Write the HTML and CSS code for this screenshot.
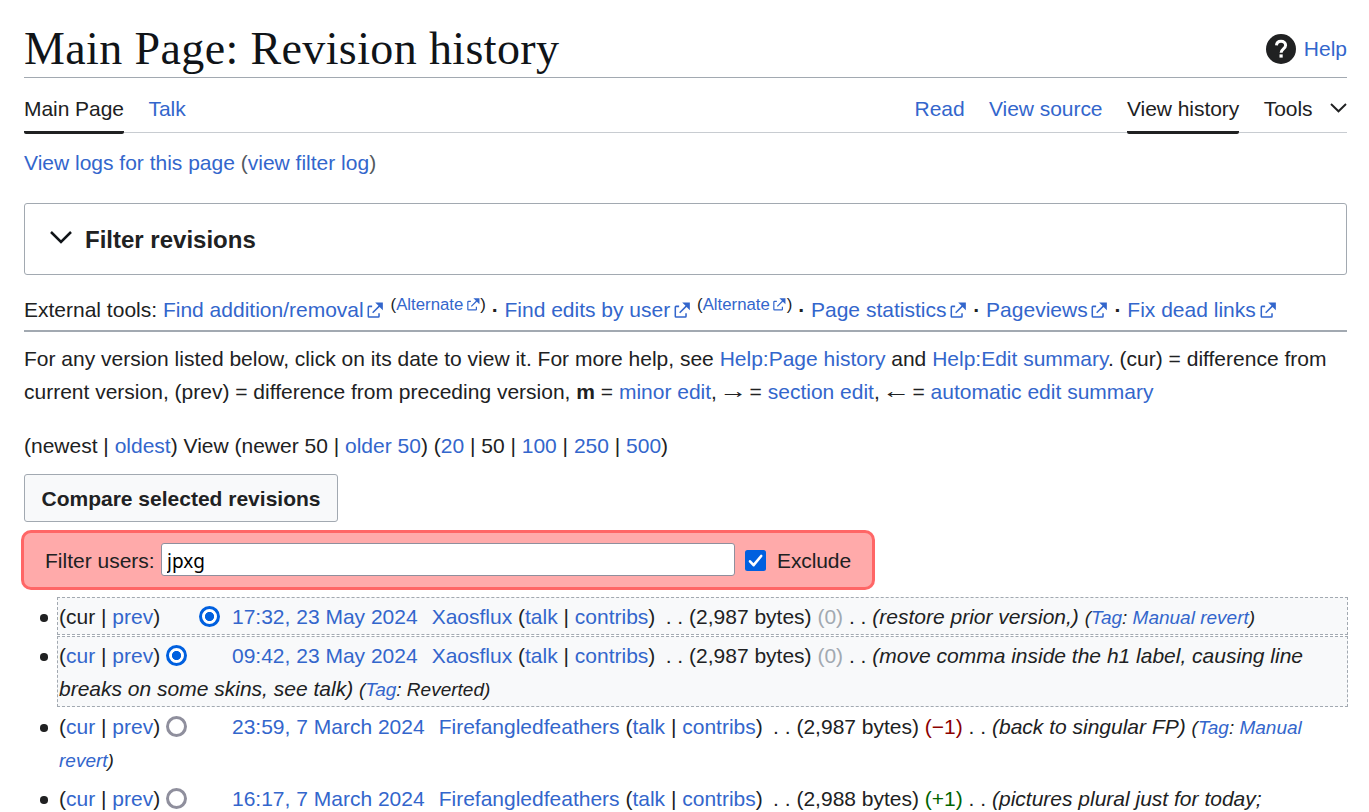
FILE: index.html
```html
<!DOCTYPE html>
<html lang="en">
<head>
<meta charset="utf-8">
<title>Main Page: Revision history</title>
<link rel="stylesheet" href="styles.css">
</head>
<body>
<svg class="defs" width="0" height="0" aria-hidden="true">
  <symbol id="ext" viewBox="0 0 12 12"><path fill="#36c" d="M6 1h5v5L8.86 3.85 4.7 8 4 7.3l4.15-4.16zM2 3h2v1H2v6h6V8h1v2a1 1 0 0 1-1 1H2a1 1 0 0 1-1-1V4a1 1 0 0 1 1-1"/></symbol>
</svg>
<header class="title-row">
  <h1>Main Page: Revision history</h1>
  <a class="help" href="#"><svg width="30" height="30" viewBox="0 0 30 30"><circle cx="15" cy="15" r="15" fill="#202122"/><path d="M10.500 11.400c.1-2.700 1.900-4.200 4.500-4.200 2.700 0 4.600 1.600 4.600 4 0 3.600-4.500 3.600-4.500 7.500" fill="none" stroke="#fff" stroke-width="3"/><rect x="13.500" y="20.400" width="3.200" height="3.200" fill="#fff"/></svg>Help</a>
</header>
<nav class="tabs">
  <span class="tab on">Main Page</span><a class="tab" href="#">Talk</a>
  <span class="grow"></span>
  <a class="tab" href="#">Read</a><a class="tab" href="#">View source</a><span class="tab on">View history</span>
  <span class="tab">Tools<svg class="caret" width="17" height="10" viewBox="0 0 17 10"><path d="M1 1l7.500 7.300L16 1" fill="none" stroke="#202122" stroke-width="1.900"/></svg></span>
</nav>
<p class="sub"><a href="#">View logs for this page</a> (<a href="#">view filter log</a>)</p>
<section class="filter-box"><svg width="22" height="13" viewBox="0 0 22 13"><path d="M1 1l10 10L21 1" fill="none" stroke="#101418" stroke-width="2.500"/></svg><b>Filter revisions</b></section>
<p class="tools">External tools: <a href="#">Find addition/removal<svg class="ext"><use href="#ext"/></svg></a> <span class="sup">(<a href="#">Alternate<svg class="ext"><use href="#ext"/></svg></a>)</span> <b>·</b> <a href="#">Find edits by user<svg class="ext"><use href="#ext"/></svg></a> <span class="sup">(<a href="#">Alternate<svg class="ext"><use href="#ext"/></svg></a>)</span> <b>·</b> <a href="#">Page statistics<svg class="ext"><use href="#ext"/></svg></a> <b>·</b> <a href="#">Pageviews<svg class="ext"><use href="#ext"/></svg></a> <b>·</b> <a href="#">Fix dead links<svg class="ext"><use href="#ext"/></svg></a></p>
<p class="legend">For any version listed below, click on its date to view it. For more help, see <a href="#">Help:Page history</a> and <a href="#">Help:Edit summary</a>. (cur) = difference from<br>current version, (prev) = difference from preceding version, <b>m</b> = <a href="#">minor edit</a>, <span class="arrow">→</span> = <a href="#">section edit</a>, <span class="arrow">←</span> = <a href="#">automatic edit summary</a></p>
<p class="pager">(newest | <a href="#">oldest</a>) View (newer 50 | <a href="#">older 50</a>) (<a href="#">20</a> | 50 | <a href="#">100</a> | <a href="#">250</a> | <a href="#">500</a>)</p>
<button class="compare">Compare selected revisions</button>
<div class="user-filter">
  <label for="users">Filter users:</label><input id="users" type="text" value="jpxg">
  <svg width="21" height="21" viewBox="0 0 21 21"><rect width="21" height="21" rx="2.500" fill="#0060df"/><path d="M5 11.300l3.600 3.900 7.600-9.200" fill="none" stroke="#fff" stroke-width="2.600" stroke-linecap="round" stroke-linejoin="round"/></svg>
  <span class="exclude">Exclude</span>
</div>
<ul class="history">
  <li class="sel"><span class="nav">(cur | <a href="#">prev</a>)</span><span class="pick second"><i class="radio checked"></i></span><a class="date" href="#">17:32, 23 May 2024</a><a class="user" href="#">Xaosflux</a> (<a href="#">talk</a> | <a href="#">contribs</a>) <span class="dots">. .</span> (2,987 bytes) <span class="zero">(0)</span> . . <em>(restore prior version,)</em> <em class="tag">(<a href="#">Tag</a>: <a href="#">Manual revert</a>)</em></li>
  <li class="sel last"><span class="nav">(<a href="#">cur</a> | <a href="#">prev</a>)</span><span class="pick"><i class="radio checked"></i></span><a class="date" href="#">09:42, 23 May 2024</a><a class="user" href="#">Xaosflux</a> (<a href="#">talk</a> | <a href="#">contribs</a>) <span class="dots">. .</span> (2,987 bytes) <span class="zero">(0)</span> . . <em>(move comma inside the h1 label, causing line<br>breaks on some skins, see talk)</em> <em class="tag">(<a href="#">Tag</a>: Reverted)</em></li>
  <li><span class="nav">(<a href="#">cur</a> | <a href="#">prev</a>)</span><span class="pick"><i class="radio"></i></span><a class="date" href="#">23:59, 7 March 2024</a><a class="user" href="#">Firefangledfeathers</a> (<a href="#">talk</a> | <a href="#">contribs</a>) <span class="dots">. .</span> (2,987 bytes) <span class="neg">(−1)</span> . . <em>(back to singular FP)</em> <em class="tag">(<a href="#">Tag</a>: <a href="#">Manual<br>revert</a>)</em></li>
  <li><span class="nav">(<a href="#">cur</a> | <a href="#">prev</a>)</span><span class="pick"><i class="radio"></i></span><a class="date" href="#">16:17, 7 March 2024</a><a class="user" href="#">Firefangledfeathers</a> (<a href="#">talk</a> | <a href="#">contribs</a>) <span class="dots">. .</span> (2,988 bytes) <span class="pos">(+1)</span> . . <em>(pictures plural just for today;</em></li>
</ul>
</body>
</html>
```

FILE: styles.css
```css
* { box-sizing: border-box; }
body {
  margin: 0;
  padding: 20px 22px 0 24px;
  background: #fff;
  color: #202122;
  font: 21px/33px "Liberation Sans", Arial, sans-serif;
  white-space: nowrap;
}
a { color: #36c; text-decoration: none; }
p { margin: 0; }
.defs { display: block; }
.title-row {
  display: flex;
  justify-content: space-between;
  height: 58px;
  border-bottom: 1px solid #a2a9b1;
}
h1 {
  margin: 0;
  color: #101418;
  font: 400 46px/57px "Liberation Serif", Georgia, serif;
  letter-spacing: 0.38px;
}
.help { display: flex; align-items: center; gap: 8px; }
.tabs {
  display: flex;
  gap: 24.5px;
  height: 55px;
  border-bottom: 1px solid #c8ccd1;
}
.tab { height: 56px; line-height: 62px; letter-spacing: -0.05px; }
.on { border-bottom: 3px solid #202122; border-radius: 0 0 2px 2px; }
.grow { flex: 1; }
.caret { margin-left: 17.5px; vertical-align: 3px; }
.sub { margin-top: 13px; color: #54595d; }
.filter-box {
  display: flex;
  align-items: center;
  gap: 13px;
  height: 72px;
  margin-top: 24px;
  padding: 0 0 0 25px;
  border: 1px solid #a2a9b1;
  border-radius: 3px;
  font-size: 24px;
}
.filter-box svg { margin-top: -4px; }
.tools {
  height: 57px;
  padding-top: 18px;
  border-bottom: 2px solid #a2a9b1;
}
.ext {
  width: 18.4px;
  height: 18.4px;
  margin: 0 -0.2px 0 2.8px;
  vertical-align: -2px;
}
.sup { font-size: 16.8px; line-height: 1; vertical-align: 7px; }
.sup .ext { width: 14.7px; height: 14.7px; margin: 0 -0.4px 0 2.6px; vertical-align: -2px; }
.legend { margin-top: 10px; }
.arrow { display: inline-block; line-height: 1; transform: translateY(-1px) scaleX(1.35); }
.pager { margin-top: 21px; }
.compare {
  display: block;
  width: 314px;
  height: 48px;
  margin-top: 12px;
  padding: 1px 0 0;
  border: 1px solid #a2a9b1;
  border-radius: 3px;
  background: #f8f9fa;
  color: #202122;
  font: 700 21px "Liberation Sans", Arial, sans-serif;
}
.user-filter {
  display: flex;
  align-items: center;
  width: 854px;
  height: 60px;
  margin: 8px 0 0 -3px;
  padding-left: 21px;
  border: 3px solid #f66;
  border-radius: 10px;
  background: #faa;
}
.user-filter label { width: 116px; }
.user-filter input {
  width: 574px;
  height: 33px;
  margin: -1px 10px 0 0;
  padding: 2px 5px 0;
  border: 1px solid #8f8f9d;
  border-radius: 3px;
  background: #fff;
  color: #000;
  font: 19px "Noto Sans", sans-serif;
}
.exclude { margin-left: 11px; letter-spacing: -0.1px; }
.history { margin: 7px -1px 0 33px; padding: 0; list-style: none; }
.history li {
  position: relative;
  margin-bottom: 1px;
  padding: 2px 1px 1px;
  border: 1px dashed transparent;
}
.history li:last-child { height: 33px; padding-bottom: 0; margin: 0; border-bottom: 0; }
.history li::before {
  content: "";
  position: absolute;
  left: -18px;
  top: 16px;
  width: 7.5px;
  height: 7.5px;
  border-radius: 50%;
  background: #202122;
}
.history .sel { border-color: #a2a9b1; background: #f8f9fa; }
.history .last { margin-bottom: 0; }
.nav { display: inline-block; width: 107px; }
.pick { display: inline-block; width: 66px; height: 21px; vertical-align: -3px; }
.second { padding-left: 33px; }
.radio {
  display: block;
  width: 21px;
  height: 21px;
  border: 3px solid #8f8f9d;
  border-radius: 50%;
  background: #fff;
}
.checked { border-color: #0060df; background: radial-gradient(circle, #0060df 4.2px, #fff 5px); }
.user { margin-left: 14px; }
.dots { margin-left: 4.5px; }
.tag { font-size: 19px; line-height: 1; }
.zero { color: #a2a9b1; }
.neg { color: #8b0000; }
.pos { color: #006400; }
```
